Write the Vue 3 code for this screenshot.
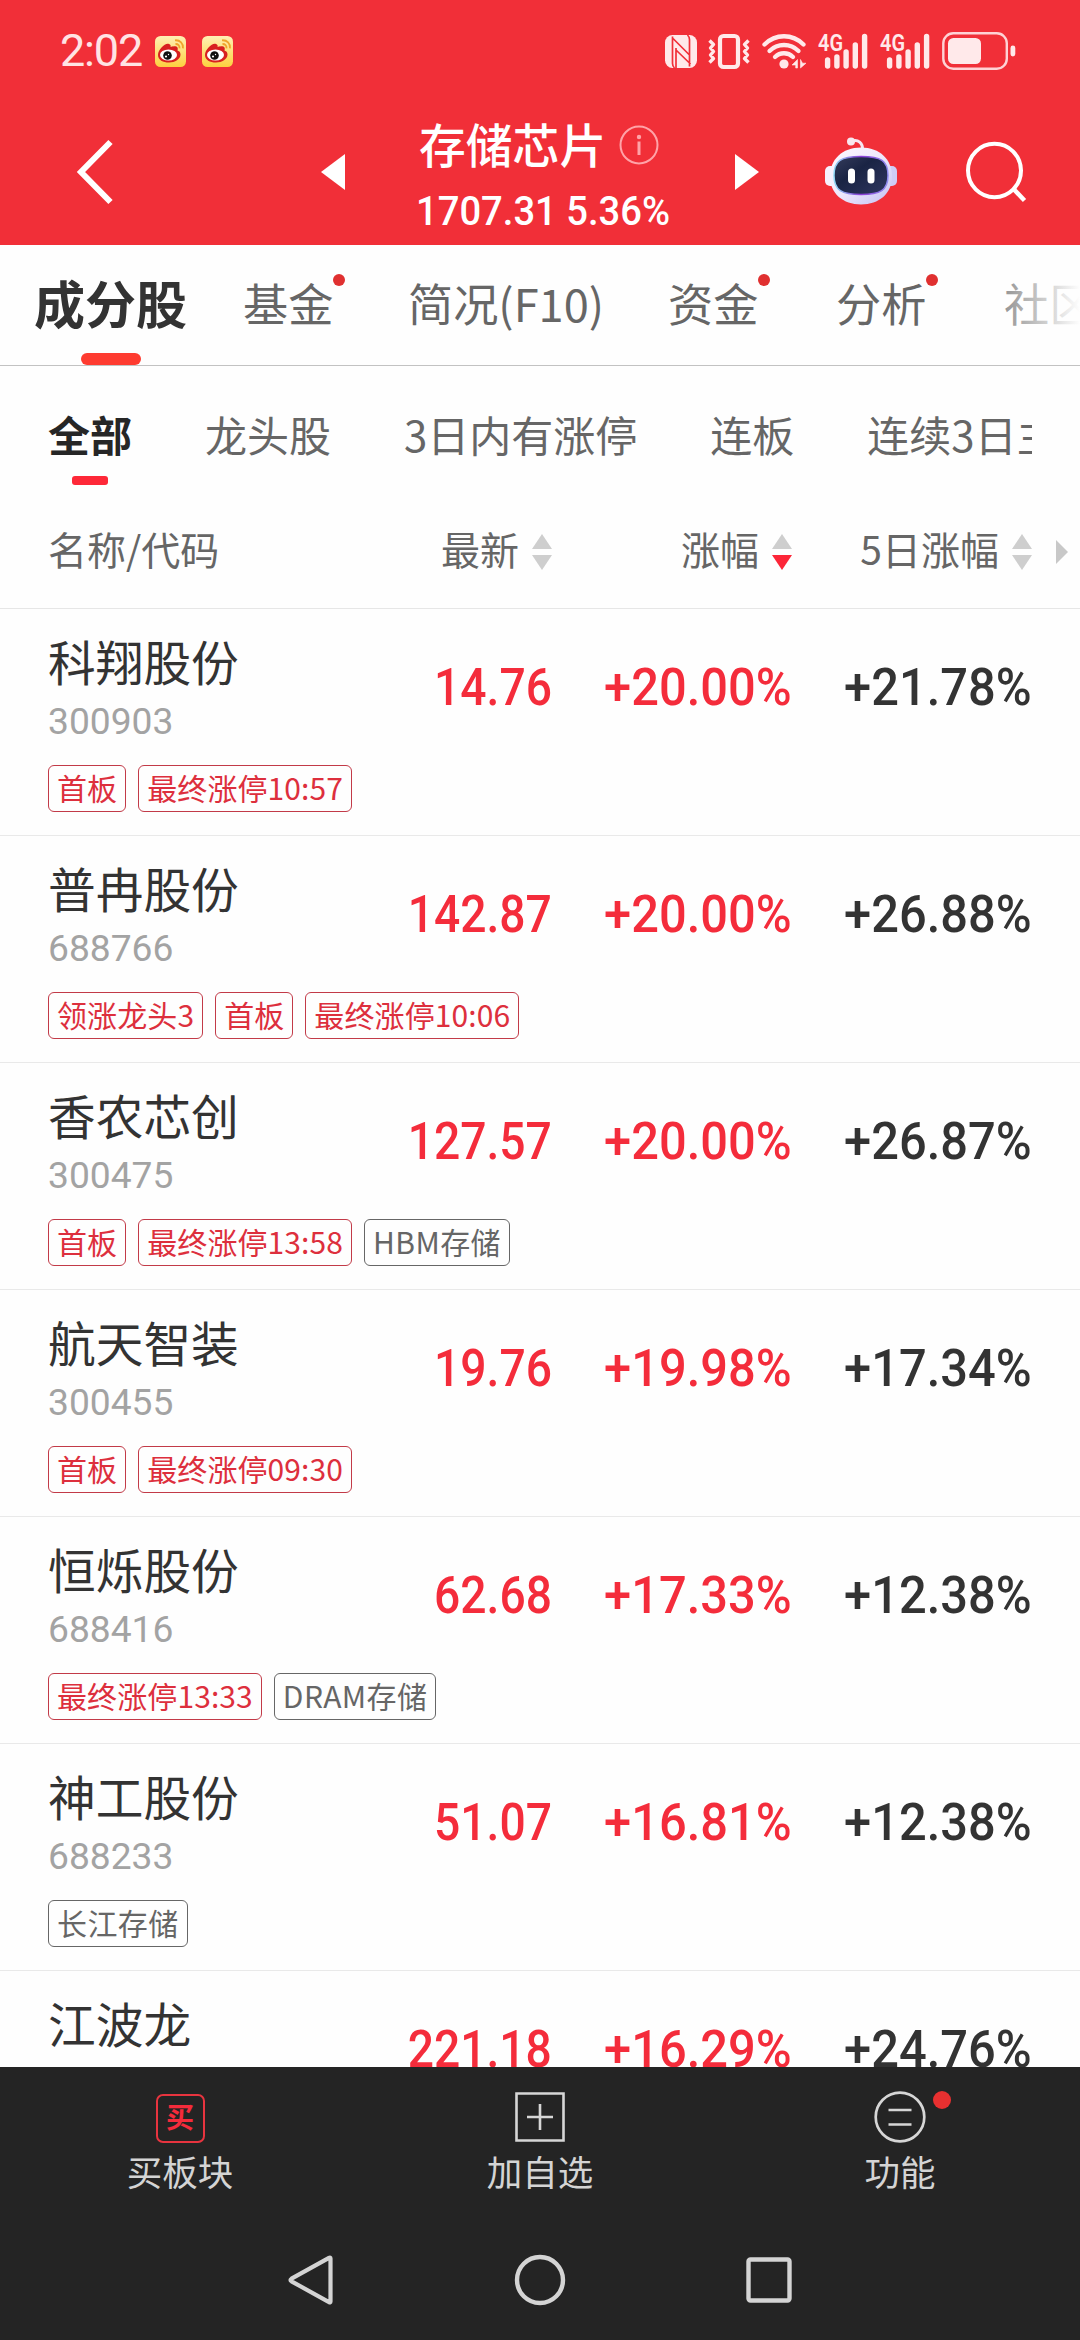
<script setup>
const tabs = [
    { label: "成分股", active: true },
    { label: "基金", dot: true },
    { label: "简况(F10)" },
    { label: "资金", dot: true },
    { label: "分析", dot: true },
    { label: "社区" },
];

const filters = ["全部", "龙头股", "3日内有涨停", "连板", "连续3日主"];

const columns = [
    { label: "最新", sort: "" },
    { label: "涨幅", sort: "desc" },
    { label: "5日涨幅", sort: "" },
];

const hot = (text) => ({ text, hot: true });
const plain = (text) => ({ text, hot: false });

const stocks = [
    {
        name: "科翔股份",
        code: "300903",
        price: "14.76",
        change: "+20.00%",
        change5: "+21.78%",
        tags: [hot("首板"), hot("最终涨停10:57")],
    },
    {
        name: "普冉股份",
        code: "688766",
        price: "142.87",
        change: "+20.00%",
        change5: "+26.88%",
        tags: [hot("领涨龙头3"), hot("首板"), hot("最终涨停10:06")],
    },
    {
        name: "香农芯创",
        code: "300475",
        price: "127.57",
        change: "+20.00%",
        change5: "+26.87%",
        tags: [hot("首板"), hot("最终涨停13:58"), plain("HBM存储")],
    },
    {
        name: "航天智装",
        code: "300455",
        price: "19.76",
        change: "+19.98%",
        change5: "+17.34%",
        tags: [hot("首板"), hot("最终涨停09:30")],
    },
    {
        name: "恒烁股份",
        code: "688416",
        price: "62.68",
        change: "+17.33%",
        change5: "+12.38%",
        tags: [hot("最终涨停13:33"), plain("DRAM存储")],
    },
    {
        name: "神工股份",
        code: "688233",
        price: "51.07",
        change: "+16.81%",
        change5: "+12.38%",
        tags: [plain("长江存储")],
    },
    {
        name: "江波龙",
        code: "",
        price: "221.18",
        change: "+16.29%",
        change5: "+24.76%",
        tags: [],
    },
];
</script>

<template>
    <div class="screen">
        <header class="top">
            <div class="status-bar">
                <span class="clock">2:02</span>
                <svg
                    v-for="n in 2"
                    :key="n"
                    class="weibo"
                    viewBox="0 0 31 31"
                >
                    <defs>
                        <linearGradient
                            :id="`weibo-bg-${n}`"
                            x1="0"
                            y1="0"
                            x2="0"
                            y2="1"
                        >
                            <stop offset="0" stop-color="#fff0b4" />
                            <stop offset="1" stop-color="#fdd03f" />
                        </linearGradient>
                    </defs>
                    <rect
                        width="31"
                        height="31"
                        rx="5.5"
                        :fill="`url(#weibo-bg-${n})`"
                    />
                    <path
                        d="M14 8c-3-2-11 5-11 11 0 5 5 7.500 11 7.500s11.500-3.500 11.500-8c0-3-2-3.500-3-4 1-3-.5-4.500-3.500-4.300-1.500.1-2.500.6-3.500.8.5-1.500 0-2.400-1.500-3z"
                        fill="#d8201f"
                    />
                    <ellipse cx="13.5" cy="19" rx="8.5" ry="5.5" fill="#fff" />
                    <circle cx="12.5" cy="19.5" r="4.3" fill="#111" />
                    <circle cx="11" cy="20.5" r="1.1" fill="#fff" />
                    <circle cx="13.5" cy="18.5" r=".7" fill="#fff" />
                    <path
                        d="M20 4.300c5-.5 8.500 3.500 8 8M20.500 8c2.500-.2 4.300 1.800 4 4.300"
                        fill="none"
                        stroke="#f0a52c"
                        stroke-width="1.8"
                    />
                </svg>

                <div class="status-icons">
                    <svg class="nfc" viewBox="0 0 32 33">
                        <rect width="32" height="33" rx="7.5" fill="#ffe9ea" />
                        <path
                            d="M7.500 1.500v27c0 2 .5 3 2 4.500M24.500 31.500v-27c0-2-.5-3-2-4.500M8 3.500l16.500 16.500M11 13v20M11 15l14.500 14"
                            fill="none"
                            stroke="#f12f38"
                            stroke-width="1.7"
                        />
                    </svg>
                    <svg class="vibrate" viewBox="0 0 42 35">
                        <rect
                            x="12"
                            y="2"
                            width="18"
                            height="31"
                            rx="3.5"
                            fill="none"
                            stroke="#ffe9ea"
                            stroke-width="4.2"
                        />
                        <path
                            d="M1.500 6.500l4 4-3 3.500 3 3.500-3 3.500 3 3.500-4 4M40.500 6.500l-4 4 3 3.500-3 3.500 3 3.500-3 3.500 4 4"
                            fill="none"
                            stroke="#ffe9ea"
                            stroke-width="3.4"
                            stroke-linejoin="round"
                        />
                    </svg>
                    <svg class="wifi" viewBox="0 0 45 36">
                        <g
                            fill="none"
                            stroke="#ffe9ea"
                            stroke-width="4.3"
                            stroke-linecap="round"
                        >
                            <path d="M2.500 11.500c11-11 28-11 39 0" />
                            <path d="M7.500 18c8-8 21-8 29 0" />
                            <path d="M13 24c5-5 13-5 18 0" />
                        </g>
                        <circle cx="22" cy="31" r="4.6" fill="#ffe9ea" />
                        <path
                            d="M35.500 26.500v8.500h-1.800v-3H30zM38.500 26.500v8.500l5.500-4.800h-3.500z"
                            fill="#ffe9ea"
                            stroke="#ffe9ea"
                            stroke-width=".6"
                        />
                    </svg>
                    <svg
                        v-for="n in 2"
                        :key="n"
                        class="signal"
                        viewBox="0 0 50 36"
                    >
                        <text
                            x="0"
                            y="18"
                            class="signal-label"
                            textLength="25"
                            lengthAdjust="spacingAndGlyphs"
                            >4G</text
                        >
                        <path
                            d="M9.600 27v6M18.900 24v9M28.100 19v14M37.300 12v21M46.600 3.500v29.500"
                            stroke="#ffe9ea"
                            stroke-width="5.4"
                            stroke-linecap="round"
                        />
                    </svg>
                    <svg class="battery" viewBox="0 0 74 38">
                        <rect
                            x="1.3"
                            y="1.3"
                            width="63.5"
                            height="35.4"
                            rx="10"
                            fill="none"
                            stroke="#ffe9ea"
                            stroke-width="2.4"
                            opacity=".88"
                        />
                        <rect
                            x="6"
                            y="6"
                            width="33"
                            height="26"
                            rx="5.5"
                            fill="#ffe9ea"
                        />
                        <rect
                            x="68.5"
                            y="13.5"
                            width="4.8"
                            height="11"
                            rx="2.4"
                            fill="#ffe9ea"
                        />
                    </svg>
                </div>
            </div>

            <nav class="nav-bar">
                <svg class="back" viewBox="0 0 38 66">
                    <path
                        d="M34.500 3L5 33l29.500 30"
                        fill="none"
                        stroke="#fff"
                        stroke-width="6"
                    />
                </svg>
                <svg class="prev" viewBox="0 0 24 36">
                    <path d="M24 0v36L0 18z" fill="#fff" />
                </svg>
                <div class="title-block">
                    <h1 class="title">
                        存储芯片
                        <svg class="info" viewBox="0 0 40 40">
                            <circle
                                cx="20"
                                cy="20"
                                r="18.5"
                                fill="none"
                                stroke="#ffa3a8"
                                stroke-width="2"
                            />
                            <circle cx="20" cy="12" r="2.2" fill="#ffa3a8" />
                            <path
                                d="M20 16.500V30"
                                stroke="#ffa3a8"
                                stroke-width="3"
                            />
                        </svg>
                    </h1>
                    <p class="index"><span>1707.31 5.36%</span></p>
                </div>
                <svg class="next" viewBox="0 0 24 36">
                    <path d="M0 0v36l24-18z" fill="#fff" />
                </svg>
                <svg class="robot" viewBox="0 0 72 68">
                    <defs>
                        <linearGradient id="robot-head" x1="0" y1="0" x2="1" y2="1">
                            <stop offset="0" stop-color="#fdf8ff" />
                            <stop offset=".5" stop-color="#eee8fb" />
                            <stop offset="1" stop-color="#c3c0f3" />
                        </linearGradient>
                        <linearGradient id="robot-rim" x1="0" y1="0" x2="1" y2="0">
                            <stop offset="0" stop-color="#8fd8f5" />
                            <stop offset=".5" stop-color="#8b3bd6" />
                            <stop offset="1" stop-color="#8f8df0" />
                        </linearGradient>
                        <linearGradient id="robot-face" x1="0" y1="0" x2="1" y2="1">
                            <stop offset="0" stop-color="#353c5c" />
                            <stop offset=".4" stop-color="#1a2444" />
                            <stop offset="1" stop-color="#2f3660" />
                        </linearGradient>
                    </defs>
                    <path
                        d="M27 4c6-2 11 2 10.500 9"
                        fill="none"
                        stroke="#f6e6f2"
                        stroke-width="3"
                    />
                    <circle cx="26" cy="4.5" r="4" fill="#f8e6ee" />
                    <rect y="29" width="12" height="20" rx="5" fill="#f6f0fd" />
                    <rect
                        x="60"
                        y="29"
                        width="12"
                        height="20"
                        rx="5"
                        fill="#cfccf6"
                    />
                    <path
                        d="M36 10.500c19 0 31 12 31 29s-13 28-31 28-31-11-31-28 12-29 31-29z"
                        fill="url(#robot-head)"
                    />
                    <path
                        d="M36 19.500c20 0 27 4 27 19s-8 19-27 19-27-4-27-19 7-19 27-19z"
                        fill="url(#robot-face)"
                        stroke="url(#robot-rim)"
                        stroke-width="1.5"
                    />
                    <rect
                        x="23"
                        y="31.5"
                        width="7"
                        height="15"
                        rx="3.5"
                        fill="#fff"
                    />
                    <rect
                        x="42.5"
                        y="31.5"
                        width="7"
                        height="15"
                        rx="3.5"
                        fill="#fff"
                    />
                </svg>
                <svg class="search" viewBox="0 0 60 60">
                    <ellipse
                        cx="28.5"
                        cy="28.5"
                        rx="26.5"
                        ry="26.7"
                        fill="none"
                        stroke="#fff"
                        stroke-width="4"
                    />
                    <path
                        d="M47.500 47l11 11.500"
                        stroke="#fff"
                        stroke-width="4.5"
                    />
                </svg>
            </nav>
        </header>

        <div class="tabs">
            <div
                v-for="tab in tabs"
                :key="tab.label"
                class="tab"
                :class="{ 'tab-active': tab.active }"
            >
                {{ tab.label }}
                <i v-if="tab.dot" class="tab-dot"></i>
            </div>
        </div>

        <div class="filters">
            <div class="filter-track">
                <div
                    v-for="(filter, i) in filters"
                    :key="filter"
                    class="filter"
                    :class="{ 'filter-active': i === 0 }"
                >
                    {{ filter }}
                </div>
            </div>
        </div>

        <div class="table-head">
            <span class="head-name">名称/代码</span>
            <span v-for="col in columns" :key="col.label" class="head-col">
                {{ col.label }}
                <svg class="sort" viewBox="0 0 20 36">
                    <path d="M0 15L10 0l10 15z" fill="#cecece" />
                    <path
                        d="M0 21l10 15 10-15z"
                        :fill="col.sort === 'desc' ? '#fc2638' : '#cecece'"
                    />
                </svg>
            </span>
            <svg class="more" viewBox="0 0 12 24">
                <path d="M0 0v24l12-12z" fill="#c8c8c8" />
            </svg>
        </div>

        <main class="stock-list">
            <section v-for="stock in stocks" :key="stock.name" class="stock">
                <div class="stock-main">
                    <div class="stock-id">
                        <div class="stock-name">{{ stock.name }}</div>
                        <div class="stock-code">{{ stock.code }}</div>
                    </div>
                    <div class="value value-up value-price">
                        <span>{{ stock.price }}</span>
                    </div>
                    <div class="value value-up">
                        <span>{{ stock.change }}</span>
                    </div>
                    <div class="value">
                        <span>{{ stock.change5 }}</span>
                    </div>
                </div>
                <div class="tags">
                    <span
                        v-for="tag in stock.tags"
                        :key="tag.text"
                        class="tag"
                        :class="{ 'tag-hot': tag.hot }"
                        >{{ tag.text }}</span
                    >
                </div>
            </section>
        </main>

        <footer class="bottom">
            <div class="actions">
                <div class="action">
                    <span class="buy-icon">买</span>
                    <span class="action-label">买板块</span>
                </div>
                <div class="action">
                    <svg class="action-icon" viewBox="0 0 52 52">
                        <path
                            d="M2.500 2.500h47v47h-47zM26 13v26M13 26h26"
                            fill="none"
                            stroke="#d6d6d6"
                            stroke-width="2.6"
                        />
                    </svg>
                    <span class="action-label">加自选</span>
                </div>
                <div class="action">
                    <div class="icon-wrap">
                        <svg class="action-icon" viewBox="0 0 52 52">
                            <circle
                                cx="26"
                                cy="26"
                                r="24.3"
                                fill="none"
                                stroke="#d6d6d6"
                                stroke-width="2.7"
                            />
                            <path
                                d="M14.500 19h23M14.500 33.500h23"
                                stroke="#d6d6d6"
                                stroke-width="2.7"
                            />
                        </svg>
                        <i class="action-dot"></i>
                    </div>
                    <span class="action-label">功能</span>
                </div>
            </div>
            <div class="system-nav">
                <svg viewBox="0 0 52 52">
                    <path
                        d="M45.500 4.500v43q0 1.500-1.500.7L6.500 27.300q-2-1.300 0-2.600L44 3.800q1.500-.8 1.500.7z"
                        fill="none"
                        stroke="#d4d4d4"
                        stroke-width="4.2"
                        stroke-linejoin="round"
                    />
                </svg>
                <svg viewBox="0 0 52 52">
                    <circle
                        cx="26"
                        cy="26"
                        r="23"
                        fill="none"
                        stroke="#d4d4d4"
                        stroke-width="4.4"
                    />
                </svg>
                <svg viewBox="0 0 52 52">
                    <rect
                        x="5.5"
                        y="5.5"
                        width="41"
                        height="41"
                        rx="2"
                        fill="none"
                        stroke="#d4d4d4"
                        stroke-width="4.4"
                    />
                </svg>
            </div>
        </footer>
    </div>
</template>

<style>
body {
    background: #fff;
}
</style>

<style scoped>
.screen {
    width: 1080px;
    height: 2340px;
    display: flex;
    flex-direction: column;
    overflow: hidden;
    background: #fefefe;
    color: #333;
    font-family: "Noto Sans CJK SC", sans-serif;
}

svg {
    display: block;
    flex: none;
    overflow: visible;
}

.top {
    flex: none;
    height: 245px;
    box-sizing: border-box;
    background: #f12f38;
    color: #fff;
}

.status-bar {
    height: 102px;
    display: flex;
    align-items: center;
    padding: 0 64px 0 60px;
}

.clock {
    width: 95px;
    font-family: Roboto, sans-serif;
    font-size: 45px;
    line-height: 54px;
    letter-spacing: -1.2px;
    color: #ffe3e4;
}

.weibo {
    width: 31px;
    height: 31px;
    margin-right: 16px;
}

.status-icons {
    display: flex;
    align-items: center;
    margin-left: auto;
}

.nfc {
    width: 32px;
    height: 33px;
    margin-right: 11px;
}

.vibrate {
    width: 42px;
    height: 35px;
    margin-right: 12px;
}

.wifi {
    width: 45px;
    height: 36px;
    margin-right: 11px;
}

.signal {
    width: 50px;
    height: 36px;
    margin-right: 12px;
}

.signal-label {
    font-family: Roboto, sans-serif;
    font-size: 24px;
    font-weight: 600;
    fill: #ffe9ea;
}

.battery {
    width: 74px;
    height: 38px;
}

.nav-bar {
    height: 140px;
    display: flex;
    align-items: center;
    padding-left: 76px;
}

.back {
    width: 38px;
    height: 66px;
}

.prev {
    width: 24px;
    height: 36px;
    margin-left: 207px;
}

.next {
    width: 24px;
    height: 36px;
}

.title-block {
    align-self: flex-start;
    width: 319px;
    margin-left: 71px;
    padding-top: 13px;
}

.title {
    display: flex;
    align-items: center;
    gap: 13px;
    margin: 0 0 0 3px;
    font-size: 46.8px;
    font-weight: 500;
    line-height: 56px;
}

.info {
    width: 40px;
    height: 40px;
    margin-top: 3px;
}

.index {
    margin: 15px 0 0;
    font-family: Roboto, sans-serif;
    font-size: 41.5px;
    font-weight: 500;
    line-height: 50px;
}

.index span {
    display: inline-block;
    transform: scaleX(0.92);
    transform-origin: left;
    white-space: nowrap;
}

.robot {
    width: 72px;
    height: 68px;
    margin: 0 69px 2px 66px;
}

.search {
    width: 60px;
    height: 60px;
}

.tabs {
    position: relative;
    flex: none;
    height: 121px;
    box-sizing: border-box;
    display: grid;
    grid-template-columns: 209px 165px 260px 168px 168px 1fr;
    align-items: center;
    padding: 0 0 5px 34px;
    border-bottom: 1px solid #c2c2c2;
}

/* fades the last tab out toward the edge */
.tabs::after {
    content: "";
    position: absolute;
    top: 0;
    right: 0;
    bottom: 0;
    width: 110px;
    background: linear-gradient(to right, rgba(254, 254, 254, 0), #fefefe);
}

.tab {
    position: relative;
    justify-self: start;
    font-size: 45.2px;
    line-height: 115px;
    color: #666;
    white-space: nowrap;
}

.tab-active {
    font-size: 51px;
    font-weight: 700;
    color: #333;
}

.tab-active::after {
    content: "";
    position: absolute;
    left: 47px;
    bottom: -5px;
    width: 60px;
    height: 12px;
    border-radius: 6px;
    background: #fe3b30;
}

.tab-dot {
    position: absolute;
    top: 29px;
    right: -12px;
    width: 12px;
    height: 12px;
    border-radius: 50%;
    background: #e03030;
}

.filters {
    flex: none;
    height: 134px;
    padding: 0 48px;
}

.filter-track {
    display: flex;
    gap: 73px;
    overflow: hidden;
}

.filter {
    position: relative;
    flex: none;
    font-size: 42px;
    line-height: 135px;
    color: #666;
}

.filter-active {
    font-weight: 700;
    color: #262626;
}

.filter-active::after {
    content: "";
    position: absolute;
    left: 24px;
    bottom: 16px;
    width: 36px;
    height: 9px;
    border-radius: 3px;
    background: #fe2838;
}

.table-head {
    flex: none;
    height: 109px;
    box-sizing: border-box;
    display: grid;
    grid-template-columns: 204px 300px 240px 240px 36px;
    align-items: start;
    padding-left: 48px;
    border-bottom: 1px solid #e6e6e6;
    color: #666;
    font-size: 39px;
    line-height: 96px;
}

.head-col {
    display: flex;
    align-items: center;
    justify-content: flex-end;
    gap: 13px;
}

.sort {
    width: 20px;
    height: 36px;
    margin-top: 7px;
}

.more {
    width: 12px;
    height: 24px;
    margin: 40px 0 0 24px;
}

.stock-list {
    flex: 1;
    min-height: 0;
    overflow: hidden;
}

.stock {
    height: 227px;
    box-sizing: border-box;
    padding: 23px 48px 0;
    border-bottom: 1px solid #e9e9e9;
}

.stock-main {
    display: grid;
    grid-template-columns: 204px 300px 240px 240px;
    height: 133px;
}

.stock-name {
    font-size: 47.7px;
    line-height: 58px;
    white-space: nowrap;
}

.stock-code {
    margin-top: 10px;
    font-family: Roboto, sans-serif;
    font-size: 37.2px;
    line-height: 42px;
    color: #a3a3a3;
}

.value {
    padding-top: 24px;
    font-family: Roboto, sans-serif;
    font-size: 52.5px;
    font-weight: 500;
    line-height: 62px;
    text-align: right;
}

.value span {
    display: inline-block;
    transform: scaleX(0.93);
    transform-origin: right;
}

.value-price span {
    transform: scaleX(0.88);
}

.value-up {
    color: #f42c3b;
}

.tags {
    display: flex;
    gap: 12px;
}

.tag {
    height: 47px;
    box-sizing: border-box;
    padding: 0 8px;
    border: 1px solid #666;
    border-radius: 6px;
    font-size: 30px;
    line-height: 43px;
    letter-spacing: 0.4px;
    color: #666;
}

.tag-hot {
    border-color: #c23a48;
    letter-spacing: 0.1px;
    color: #dd2f3d;
}

.bottom {
    flex: none;
    height: 273px;
    background: #242424;
}

.actions {
    display: grid;
    grid-template-columns: repeat(3, 360px);
    padding-top: 24px;
}

.action {
    display: flex;
    flex-direction: column;
    align-items: center;
}

.action-icon {
    width: 52px;
    height: 52px;
}

.buy-icon {
    width: 49px;
    height: 49px;
    margin-top: 3px;
    box-sizing: border-box;
    border: 2px solid #e8343f;
    border-radius: 7px;
    font-size: 28px;
    font-weight: 700;
    line-height: 41px;
    text-align: center;
    color: #f52b3b;
}

.icon-wrap {
    position: relative;
}

.action-dot {
    position: absolute;
    top: 0;
    left: 59px;
    width: 18px;
    height: 18px;
    border-radius: 50%;
    background: #e83030;
}

.action-label {
    margin-top: 6px;
    font-size: 35.5px;
    line-height: 44px;
    color: #d4d4d4;
}

.system-nav {
    display: flex;
    justify-content: center;
    gap: 177px;
    padding-top: 61px;
}

.system-nav svg {
    width: 52px;
    height: 52px;
}
</style>
